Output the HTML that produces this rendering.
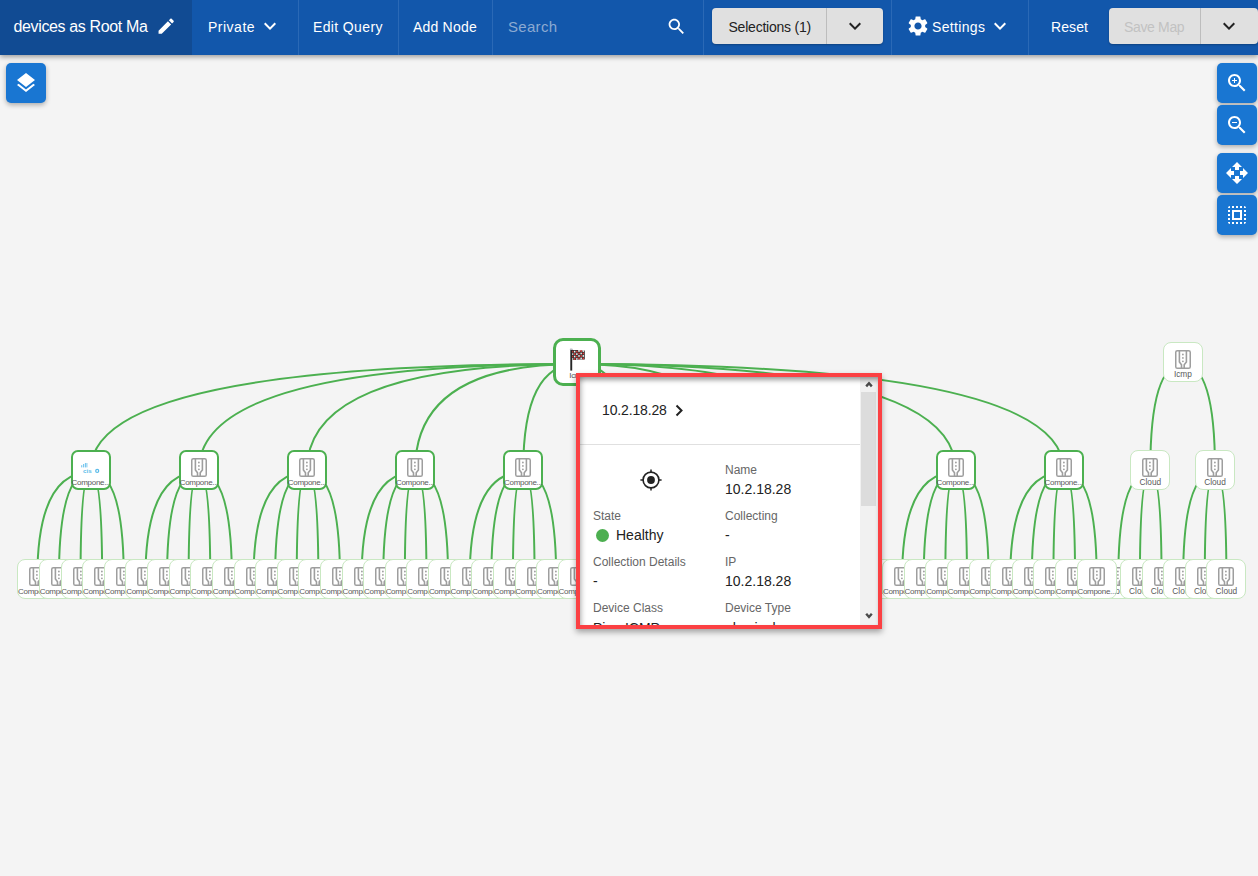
<!DOCTYPE html><html><head><meta charset="utf-8"><title>Map</title><style>
*{box-sizing:content-box}
html,body{margin:0;padding:0}
body{width:1258px;height:876px;overflow:hidden;background:#f4f4f4;font-family:"Liberation Sans",sans-serif;position:relative}
.hdr{position:absolute;left:0;top:0;width:1258px;height:55px;background:#1257ab;box-shadow:0 2px 5px rgba(0,0,0,.36);z-index:20}
.hdr .t{position:absolute;left:0;top:0;width:192px;height:55px;background:#114b93}
.hdr .txt{position:absolute;color:#fff;font-size:14px;white-space:nowrap;line-height:16px}
.sep{position:absolute;top:0;width:1px;height:55px;background:#2a69b6}
.btn{position:absolute;top:8px;height:36px;background:#e0e0e0;border-radius:4px;box-shadow:0 1px 2px rgba(0,0,0,.25)}
.btn .dv{position:absolute;top:0;width:1px;height:36px;background:#bdbdbd}
.edges{position:absolute;left:0;top:0;z-index:1}
.nd{position:absolute;background:#fff;box-sizing:content-box}
.nd .lb{position:absolute;left:-2px;right:-2px;bottom:2px;text-align:center;font-size:8px;line-height:9px;color:#5a5a5a;white-space:nowrap;overflow:visible;letter-spacing:-0.3px}
.nd .dev{position:absolute;left:50%;top:7px;margin-left:-8px}
.l1 .dev{top:6px}
.cl .lb{font-size:8.3px;letter-spacing:0}
.l1 .lb{bottom:1px}
.nd .cis{position:absolute;left:0;top:0}
.rt svg{position:absolute;left:11.6px;top:5.6px}
.rt .lb{bottom:3px;font-size:8px}
.fab{position:absolute;width:40px;height:40px;background:#1976d2;border-radius:5px;box-shadow:0 2px 5px rgba(0,0,0,.3);z-index:10}
.fab svg{position:absolute;left:8px;top:8px}
.pop{position:absolute;left:576px;top:373px;width:298px;height:248px;border:4px solid #fb4043;background:#fff;z-index:15;box-shadow:0 3px 6px rgba(0,0,0,.35);overflow:hidden}
.pop .ins{position:absolute;left:0;top:0;right:0;bottom:0;z-index:5;box-shadow:inset 0 5px 5px -2px rgba(0,0,0,.38), inset 5px 0 5px -3px rgba(0,0,0,.2)}
.pop .l{position:absolute;font-size:12px;color:#666;white-space:nowrap;line-height:14px}
.pop .v{position:absolute;font-size:14px;color:#222;white-space:nowrap;line-height:16px}
</style></head><body>
<div class="hdr"><div class="t"></div>
<div class="txt" style="left:13.5px;top:18px;font-size:16px;line-height:18px;letter-spacing:-0.36px">devices as Root Ma</div>
<svg style="position:absolute;left:155.6px;top:16px" width="20.4" height="20.4" viewBox="0 0 24 24"><path fill="#fff" d="M3 17.25V21h3.75L17.81 9.94l-3.75-3.75L3 17.25zM20.71 7.04c.39-.39.39-1.02 0-1.41l-2.34-2.34c-.39-.39-1.02-.39-1.41 0l-1.83 1.83 3.75 3.75 1.83-1.83z"/></svg>
<div class="txt" style="left:208px;top:19px;letter-spacing:0.5px">Private</div>
<div style="position:absolute;left:258px;top:14px"><svg style="display:block" width="24" height="24" viewBox="0 0 24 24"><path fill="#fff" d="M16.59 8.59L12 13.17 7.41 8.59 6 10l6 6 6-6z"/></svg></div>
<div class="sep" style="left:298px"></div>
<div class="txt" style="left:313px;top:19px;letter-spacing:0.37px">Edit Query</div>
<div class="sep" style="left:398px"></div>
<div class="txt" style="left:413px;top:19px;letter-spacing:0.2px">Add Node</div>
<div class="sep" style="left:492px"></div>
<div class="txt" style="left:508px;top:19px;color:#8caad2;font-size:15px;letter-spacing:0.3px">Search</div>
<svg style="position:absolute;left:665.9px;top:15.6px" width="21" height="21" viewBox="0 0 24 24"><path fill="#fff" d="M15.5 14h-.79l-.28-.27C15.41 12.59 16 11.11 16 9.5 16 5.91 13.09 3 9.5 3S3 5.91 3 9.5 5.91 16 9.5 16c1.61 0 3.09-.59 4.23-1.57l.27.28v.79l5 4.99L20.49 19l-4.99-5zm-6 0C7.01 14 5 11.99 5 9.5S7.01 5 9.5 5 14 7.01 14 9.5 11.99 14 9.5 14z"/></svg>
<div class="sep" style="left:703px"></div>
<div class="btn" style="left:712px;width:171px"><div class="dv" style="left:114px"></div><div class="txt" style="left:16.5px;top:11px;color:#222;letter-spacing:-0.22px">Selections (1)</div><div style="position:absolute;left:131px;top:6px"><svg style="display:block" width="24" height="24" viewBox="0 0 24 24"><path fill="#222" d="M16.59 8.59L12 13.17 7.41 8.59 6 10l6 6 6-6z"/></svg></div></div>
<div class="sep" style="left:891px"></div>
<svg style="position:absolute;left:906px;top:14px" width="24" height="24" viewBox="0 0 24 24"><path fill="#fff" d="M19.14 12.94c.04-.3.06-.61.06-.94 0-.32-.02-.64-.07-.94l2.03-1.58c.18-.14.23-.41.12-.61l-1.92-3.32c-.12-.22-.37-.29-.59-.22l-2.39.96c-.5-.38-1.03-.7-1.62-.94l-.36-2.54c-.04-.24-.24-.41-.48-.41h-3.84c-.24 0-.43.17-.47.41l-.36 2.54c-.59.24-1.13.57-1.62.94l-2.39-.96c-.22-.08-.47 0-.59.22L2.74 8.87c-.12.21-.08.47.12.61l2.03 1.58c-.05.3-.09.63-.09.94s.02.64.07.94l-2.03 1.58c-.18.14-.23.41-.12.61l1.92 3.32c.12.22.37.29.59.22l2.39-.96c.5.38 1.03.7 1.62.94l.36 2.54c.05.24.24.41.48.41h3.84c.24 0 .44-.17.47-.41l.36-2.54c.59-.24 1.13-.56 1.62-.94l2.39.96c.22.08.47 0 .59-.22l1.92-3.32c.12-.22.07-.47-.12-.61l-2.01-1.58zM12 15.6c-1.98 0-3.6-1.62-3.6-3.6s1.62-3.6 3.6-3.6 3.6 1.62 3.6 3.6-1.62 3.6-3.6 3.6z"/></svg>
<div class="txt" style="left:932px;top:19px;letter-spacing:0.33px">Settings</div>
<div style="position:absolute;left:988px;top:14px"><svg style="display:block" width="24" height="24" viewBox="0 0 24 24"><path fill="#fff" d="M16.59 8.59L12 13.17 7.41 8.59 6 10l6 6 6-6z"/></svg></div>
<div class="sep" style="left:1028px"></div>
<div class="txt" style="left:1051px;top:19px;letter-spacing:0.1px">Reset</div>
<div class="btn" style="left:1109px;width:149px"><div class="dv" style="left:91px"></div><div class="txt" style="left:15px;top:11px;color:#c2c2c2;letter-spacing:-0.34px">Save Map</div><div style="position:absolute;left:108px;top:6px"><svg style="display:block" width="24" height="24" viewBox="0 0 24 24"><path fill="#222" d="M16.59 8.59L12 13.17 7.41 8.59 6 10l6 6 6-6z"/></svg></div></div>
</div>
<svg class="edges" width="1258" height="876" viewBox="0 0 1258 876"><g fill="none" stroke="#4cb050" stroke-width="2"><path d="M577.3 364 Q90.8 364 90.8 470"/><path d="M577.3 364 Q198.9 364 198.9 470"/><path d="M577.3 364 Q307 364 307 470"/><path d="M577.3 364 Q415.1 364 415.1 470"/><path d="M577.3 364 Q523.2 364 523.2 470"/><path d="M577.3 364 Q631.3 364 631.3 470"/><path d="M577.3 364 Q739.4 364 739.4 470"/><path d="M577.3 364 Q847.5 364 847.5 470"/><path d="M577.3 364 Q955.6 364 955.6 470"/><path d="M577.3 364 Q1063.7 364 1063.7 470"/><path d="M1182.9 364 Q1150.3 364 1150.3 470"/><path d="M1182.9 364 Q1215 364 1215 470"/><path d="M90.8 472 Q37.3 472 37.3 578.6"/><path d="M90.8 472 Q58.92 472 58.92 578.6"/><path d="M90.8 472 Q80.54 472 80.54 578.6"/><path d="M90.8 472 Q102.16 472 102.16 578.6"/><path d="M90.8 472 Q123.78 472 123.78 578.6"/><path d="M198.9 472 Q145.4 472 145.4 578.6"/><path d="M198.9 472 Q167.02 472 167.02 578.6"/><path d="M198.9 472 Q188.64 472 188.64 578.6"/><path d="M198.9 472 Q210.26 472 210.26 578.6"/><path d="M198.9 472 Q231.88 472 231.88 578.6"/><path d="M307 472 Q253.5 472 253.5 578.6"/><path d="M307 472 Q275.12 472 275.12 578.6"/><path d="M307 472 Q296.74 472 296.74 578.6"/><path d="M307 472 Q318.36 472 318.36 578.6"/><path d="M307 472 Q339.98 472 339.98 578.6"/><path d="M415.1 472 Q361.6 472 361.6 578.6"/><path d="M415.1 472 Q383.22 472 383.22 578.6"/><path d="M415.1 472 Q404.84 472 404.84 578.6"/><path d="M415.1 472 Q426.46 472 426.46 578.6"/><path d="M415.1 472 Q448.08 472 448.08 578.6"/><path d="M523.2 472 Q469.7 472 469.7 578.6"/><path d="M523.2 472 Q491.32 472 491.32 578.6"/><path d="M523.2 472 Q512.94 472 512.94 578.6"/><path d="M523.2 472 Q534.56 472 534.56 578.6"/><path d="M523.2 472 Q556.18 472 556.18 578.6"/><path d="M631.3 472 Q577.8 472 577.8 578.6"/><path d="M631.3 472 Q599.42 472 599.42 578.6"/><path d="M631.3 472 Q621.04 472 621.04 578.6"/><path d="M631.3 472 Q642.66 472 642.66 578.6"/><path d="M631.3 472 Q664.28 472 664.28 578.6"/><path d="M739.4 472 Q685.9 472 685.9 578.6"/><path d="M739.4 472 Q707.52 472 707.52 578.6"/><path d="M739.4 472 Q729.14 472 729.14 578.6"/><path d="M739.4 472 Q750.76 472 750.76 578.6"/><path d="M739.4 472 Q772.38 472 772.38 578.6"/><path d="M847.5 472 Q794 472 794 578.6"/><path d="M847.5 472 Q815.62 472 815.62 578.6"/><path d="M847.5 472 Q837.24 472 837.24 578.6"/><path d="M847.5 472 Q858.86 472 858.86 578.6"/><path d="M847.5 472 Q880.48 472 880.48 578.6"/><path d="M955.6 472 Q902.1 472 902.1 578.6"/><path d="M955.6 472 Q923.72 472 923.72 578.6"/><path d="M955.6 472 Q945.34 472 945.34 578.6"/><path d="M955.6 472 Q966.96 472 966.96 578.6"/><path d="M955.6 472 Q988.58 472 988.58 578.6"/><path d="M1063.7 472 Q1010.2 472 1010.2 578.6"/><path d="M1063.7 472 Q1031.82 472 1031.82 578.6"/><path d="M1063.7 472 Q1053.44 472 1053.44 578.6"/><path d="M1063.7 472 Q1075.06 472 1075.06 578.6"/><path d="M1063.7 472 Q1096.68 472 1096.68 578.6"/><path d="M1150.3 472 Q1118.3 472 1118.3 578.6"/><path d="M1150.3 472 Q1139.92 472 1139.92 578.6"/><path d="M1150.3 472 Q1161.54 472 1161.54 578.6"/><path d="M1215 472 Q1183.16 472 1183.16 578.6"/><path d="M1215 472 Q1204.78 472 1204.78 578.6"/><path d="M1215 472 Q1226.4 472 1226.4 578.6"/></g></svg>
<div class="nd l2 cl" style="left:1098.3px;top:558.6px;width:38px;height:38px;border:1px solid #c9e8c2;border-radius:8px;z-index:2"><svg class="dev" width="16" height="19" viewBox="0 0 16 19"><rect x="0.75" y="0.75" width="14.5" height="17.5" rx="1.6" fill="none" stroke="#9e9e9e" stroke-width="1.5"/><path d="M4.4 1 V11.9 L6.5 14.8 V18.3 M11.4 1 V11.9 L9.2 14.8 V18.3" fill="none" stroke="#9e9e9e" stroke-width="1.6"/><circle cx="7.9" cy="4.5" r="0.9" fill="#9e9e9e"/><circle cx="7.9" cy="7.9" r="0.9" fill="#9e9e9e"/><circle cx="7.9" cy="11.3" r="0.9" fill="#9e9e9e"/></svg><span class="lb">Cloud</span></div>
<div class="nd l2 cl" style="left:1119.92px;top:558.6px;width:38px;height:38px;border:1px solid #c9e8c2;border-radius:8px;z-index:2"><svg class="dev" width="16" height="19" viewBox="0 0 16 19"><rect x="0.75" y="0.75" width="14.5" height="17.5" rx="1.6" fill="none" stroke="#9e9e9e" stroke-width="1.5"/><path d="M4.4 1 V11.9 L6.5 14.8 V18.3 M11.4 1 V11.9 L9.2 14.8 V18.3" fill="none" stroke="#9e9e9e" stroke-width="1.6"/><circle cx="7.9" cy="4.5" r="0.9" fill="#9e9e9e"/><circle cx="7.9" cy="7.9" r="0.9" fill="#9e9e9e"/><circle cx="7.9" cy="11.3" r="0.9" fill="#9e9e9e"/></svg><span class="lb">Cloud</span></div>
<div class="nd l2 cl" style="left:1141.54px;top:558.6px;width:38px;height:38px;border:1px solid #c9e8c2;border-radius:8px;z-index:2"><svg class="dev" width="16" height="19" viewBox="0 0 16 19"><rect x="0.75" y="0.75" width="14.5" height="17.5" rx="1.6" fill="none" stroke="#9e9e9e" stroke-width="1.5"/><path d="M4.4 1 V11.9 L6.5 14.8 V18.3 M11.4 1 V11.9 L9.2 14.8 V18.3" fill="none" stroke="#9e9e9e" stroke-width="1.6"/><circle cx="7.9" cy="4.5" r="0.9" fill="#9e9e9e"/><circle cx="7.9" cy="7.9" r="0.9" fill="#9e9e9e"/><circle cx="7.9" cy="11.3" r="0.9" fill="#9e9e9e"/></svg><span class="lb">Cloud</span></div>
<div class="nd l2 cl" style="left:1163.16px;top:558.6px;width:38px;height:38px;border:1px solid #c9e8c2;border-radius:8px;z-index:2"><svg class="dev" width="16" height="19" viewBox="0 0 16 19"><rect x="0.75" y="0.75" width="14.5" height="17.5" rx="1.6" fill="none" stroke="#9e9e9e" stroke-width="1.5"/><path d="M4.4 1 V11.9 L6.5 14.8 V18.3 M11.4 1 V11.9 L9.2 14.8 V18.3" fill="none" stroke="#9e9e9e" stroke-width="1.6"/><circle cx="7.9" cy="4.5" r="0.9" fill="#9e9e9e"/><circle cx="7.9" cy="7.9" r="0.9" fill="#9e9e9e"/><circle cx="7.9" cy="11.3" r="0.9" fill="#9e9e9e"/></svg><span class="lb">Cloud</span></div>
<div class="nd l2 cl" style="left:1184.78px;top:558.6px;width:38px;height:38px;border:1px solid #c9e8c2;border-radius:8px;z-index:2"><svg class="dev" width="16" height="19" viewBox="0 0 16 19"><rect x="0.75" y="0.75" width="14.5" height="17.5" rx="1.6" fill="none" stroke="#9e9e9e" stroke-width="1.5"/><path d="M4.4 1 V11.9 L6.5 14.8 V18.3 M11.4 1 V11.9 L9.2 14.8 V18.3" fill="none" stroke="#9e9e9e" stroke-width="1.6"/><circle cx="7.9" cy="4.5" r="0.9" fill="#9e9e9e"/><circle cx="7.9" cy="7.9" r="0.9" fill="#9e9e9e"/><circle cx="7.9" cy="11.3" r="0.9" fill="#9e9e9e"/></svg><span class="lb">Cloud</span></div>
<div class="nd l2 cl" style="left:1206.4px;top:558.6px;width:38px;height:38px;border:1px solid #c9e8c2;border-radius:8px;z-index:2"><svg class="dev" width="16" height="19" viewBox="0 0 16 19"><rect x="0.75" y="0.75" width="14.5" height="17.5" rx="1.6" fill="none" stroke="#9e9e9e" stroke-width="1.5"/><path d="M4.4 1 V11.9 L6.5 14.8 V18.3 M11.4 1 V11.9 L9.2 14.8 V18.3" fill="none" stroke="#9e9e9e" stroke-width="1.6"/><circle cx="7.9" cy="4.5" r="0.9" fill="#9e9e9e"/><circle cx="7.9" cy="7.9" r="0.9" fill="#9e9e9e"/><circle cx="7.9" cy="11.3" r="0.9" fill="#9e9e9e"/></svg><span class="lb">Cloud</span></div>
<div class="nd l2" style="left:17.3px;top:558.6px;width:38px;height:38px;border:1px solid #c9e8c2;border-radius:8px;z-index:2"><svg class="dev" width="16" height="19" viewBox="0 0 16 19"><rect x="0.75" y="0.75" width="14.5" height="17.5" rx="1.6" fill="none" stroke="#9e9e9e" stroke-width="1.5"/><path d="M4.4 1 V11.9 L6.5 14.8 V18.3 M11.4 1 V11.9 L9.2 14.8 V18.3" fill="none" stroke="#9e9e9e" stroke-width="1.6"/><circle cx="7.9" cy="4.5" r="0.9" fill="#9e9e9e"/><circle cx="7.9" cy="7.9" r="0.9" fill="#9e9e9e"/><circle cx="7.9" cy="11.3" r="0.9" fill="#9e9e9e"/></svg><span class="lb">Compone...</span></div>
<div class="nd l2" style="left:38.92px;top:558.6px;width:38px;height:38px;border:1px solid #c9e8c2;border-radius:8px;z-index:2"><svg class="dev" width="16" height="19" viewBox="0 0 16 19"><rect x="0.75" y="0.75" width="14.5" height="17.5" rx="1.6" fill="none" stroke="#9e9e9e" stroke-width="1.5"/><path d="M4.4 1 V11.9 L6.5 14.8 V18.3 M11.4 1 V11.9 L9.2 14.8 V18.3" fill="none" stroke="#9e9e9e" stroke-width="1.6"/><circle cx="7.9" cy="4.5" r="0.9" fill="#9e9e9e"/><circle cx="7.9" cy="7.9" r="0.9" fill="#9e9e9e"/><circle cx="7.9" cy="11.3" r="0.9" fill="#9e9e9e"/></svg><span class="lb">Compone...</span></div>
<div class="nd l2" style="left:60.54px;top:558.6px;width:38px;height:38px;border:1px solid #c9e8c2;border-radius:8px;z-index:2"><svg class="dev" width="16" height="19" viewBox="0 0 16 19"><rect x="0.75" y="0.75" width="14.5" height="17.5" rx="1.6" fill="none" stroke="#9e9e9e" stroke-width="1.5"/><path d="M4.4 1 V11.9 L6.5 14.8 V18.3 M11.4 1 V11.9 L9.2 14.8 V18.3" fill="none" stroke="#9e9e9e" stroke-width="1.6"/><circle cx="7.9" cy="4.5" r="0.9" fill="#9e9e9e"/><circle cx="7.9" cy="7.9" r="0.9" fill="#9e9e9e"/><circle cx="7.9" cy="11.3" r="0.9" fill="#9e9e9e"/></svg><span class="lb">Compone...</span></div>
<div class="nd l2" style="left:82.16px;top:558.6px;width:38px;height:38px;border:1px solid #c9e8c2;border-radius:8px;z-index:2"><svg class="dev" width="16" height="19" viewBox="0 0 16 19"><rect x="0.75" y="0.75" width="14.5" height="17.5" rx="1.6" fill="none" stroke="#9e9e9e" stroke-width="1.5"/><path d="M4.4 1 V11.9 L6.5 14.8 V18.3 M11.4 1 V11.9 L9.2 14.8 V18.3" fill="none" stroke="#9e9e9e" stroke-width="1.6"/><circle cx="7.9" cy="4.5" r="0.9" fill="#9e9e9e"/><circle cx="7.9" cy="7.9" r="0.9" fill="#9e9e9e"/><circle cx="7.9" cy="11.3" r="0.9" fill="#9e9e9e"/></svg><span class="lb">Compone...</span></div>
<div class="nd l2" style="left:103.78px;top:558.6px;width:38px;height:38px;border:1px solid #c9e8c2;border-radius:8px;z-index:2"><svg class="dev" width="16" height="19" viewBox="0 0 16 19"><rect x="0.75" y="0.75" width="14.5" height="17.5" rx="1.6" fill="none" stroke="#9e9e9e" stroke-width="1.5"/><path d="M4.4 1 V11.9 L6.5 14.8 V18.3 M11.4 1 V11.9 L9.2 14.8 V18.3" fill="none" stroke="#9e9e9e" stroke-width="1.6"/><circle cx="7.9" cy="4.5" r="0.9" fill="#9e9e9e"/><circle cx="7.9" cy="7.9" r="0.9" fill="#9e9e9e"/><circle cx="7.9" cy="11.3" r="0.9" fill="#9e9e9e"/></svg><span class="lb">Compone...</span></div>
<div class="nd l2" style="left:125.4px;top:558.6px;width:38px;height:38px;border:1px solid #c9e8c2;border-radius:8px;z-index:2"><svg class="dev" width="16" height="19" viewBox="0 0 16 19"><rect x="0.75" y="0.75" width="14.5" height="17.5" rx="1.6" fill="none" stroke="#9e9e9e" stroke-width="1.5"/><path d="M4.4 1 V11.9 L6.5 14.8 V18.3 M11.4 1 V11.9 L9.2 14.8 V18.3" fill="none" stroke="#9e9e9e" stroke-width="1.6"/><circle cx="7.9" cy="4.5" r="0.9" fill="#9e9e9e"/><circle cx="7.9" cy="7.9" r="0.9" fill="#9e9e9e"/><circle cx="7.9" cy="11.3" r="0.9" fill="#9e9e9e"/></svg><span class="lb">Compone...</span></div>
<div class="nd l2" style="left:147.02px;top:558.6px;width:38px;height:38px;border:1px solid #c9e8c2;border-radius:8px;z-index:2"><svg class="dev" width="16" height="19" viewBox="0 0 16 19"><rect x="0.75" y="0.75" width="14.5" height="17.5" rx="1.6" fill="none" stroke="#9e9e9e" stroke-width="1.5"/><path d="M4.4 1 V11.9 L6.5 14.8 V18.3 M11.4 1 V11.9 L9.2 14.8 V18.3" fill="none" stroke="#9e9e9e" stroke-width="1.6"/><circle cx="7.9" cy="4.5" r="0.9" fill="#9e9e9e"/><circle cx="7.9" cy="7.9" r="0.9" fill="#9e9e9e"/><circle cx="7.9" cy="11.3" r="0.9" fill="#9e9e9e"/></svg><span class="lb">Compone...</span></div>
<div class="nd l2" style="left:168.64px;top:558.6px;width:38px;height:38px;border:1px solid #c9e8c2;border-radius:8px;z-index:2"><svg class="dev" width="16" height="19" viewBox="0 0 16 19"><rect x="0.75" y="0.75" width="14.5" height="17.5" rx="1.6" fill="none" stroke="#9e9e9e" stroke-width="1.5"/><path d="M4.4 1 V11.9 L6.5 14.8 V18.3 M11.4 1 V11.9 L9.2 14.8 V18.3" fill="none" stroke="#9e9e9e" stroke-width="1.6"/><circle cx="7.9" cy="4.5" r="0.9" fill="#9e9e9e"/><circle cx="7.9" cy="7.9" r="0.9" fill="#9e9e9e"/><circle cx="7.9" cy="11.3" r="0.9" fill="#9e9e9e"/></svg><span class="lb">Compone...</span></div>
<div class="nd l2" style="left:190.26px;top:558.6px;width:38px;height:38px;border:1px solid #c9e8c2;border-radius:8px;z-index:2"><svg class="dev" width="16" height="19" viewBox="0 0 16 19"><rect x="0.75" y="0.75" width="14.5" height="17.5" rx="1.6" fill="none" stroke="#9e9e9e" stroke-width="1.5"/><path d="M4.4 1 V11.9 L6.5 14.8 V18.3 M11.4 1 V11.9 L9.2 14.8 V18.3" fill="none" stroke="#9e9e9e" stroke-width="1.6"/><circle cx="7.9" cy="4.5" r="0.9" fill="#9e9e9e"/><circle cx="7.9" cy="7.9" r="0.9" fill="#9e9e9e"/><circle cx="7.9" cy="11.3" r="0.9" fill="#9e9e9e"/></svg><span class="lb">Compone...</span></div>
<div class="nd l2" style="left:211.88px;top:558.6px;width:38px;height:38px;border:1px solid #c9e8c2;border-radius:8px;z-index:2"><svg class="dev" width="16" height="19" viewBox="0 0 16 19"><rect x="0.75" y="0.75" width="14.5" height="17.5" rx="1.6" fill="none" stroke="#9e9e9e" stroke-width="1.5"/><path d="M4.4 1 V11.9 L6.5 14.8 V18.3 M11.4 1 V11.9 L9.2 14.8 V18.3" fill="none" stroke="#9e9e9e" stroke-width="1.6"/><circle cx="7.9" cy="4.5" r="0.9" fill="#9e9e9e"/><circle cx="7.9" cy="7.9" r="0.9" fill="#9e9e9e"/><circle cx="7.9" cy="11.3" r="0.9" fill="#9e9e9e"/></svg><span class="lb">Compone...</span></div>
<div class="nd l2" style="left:233.5px;top:558.6px;width:38px;height:38px;border:1px solid #c9e8c2;border-radius:8px;z-index:2"><svg class="dev" width="16" height="19" viewBox="0 0 16 19"><rect x="0.75" y="0.75" width="14.5" height="17.5" rx="1.6" fill="none" stroke="#9e9e9e" stroke-width="1.5"/><path d="M4.4 1 V11.9 L6.5 14.8 V18.3 M11.4 1 V11.9 L9.2 14.8 V18.3" fill="none" stroke="#9e9e9e" stroke-width="1.6"/><circle cx="7.9" cy="4.5" r="0.9" fill="#9e9e9e"/><circle cx="7.9" cy="7.9" r="0.9" fill="#9e9e9e"/><circle cx="7.9" cy="11.3" r="0.9" fill="#9e9e9e"/></svg><span class="lb">Compone...</span></div>
<div class="nd l2" style="left:255.12px;top:558.6px;width:38px;height:38px;border:1px solid #c9e8c2;border-radius:8px;z-index:2"><svg class="dev" width="16" height="19" viewBox="0 0 16 19"><rect x="0.75" y="0.75" width="14.5" height="17.5" rx="1.6" fill="none" stroke="#9e9e9e" stroke-width="1.5"/><path d="M4.4 1 V11.9 L6.5 14.8 V18.3 M11.4 1 V11.9 L9.2 14.8 V18.3" fill="none" stroke="#9e9e9e" stroke-width="1.6"/><circle cx="7.9" cy="4.5" r="0.9" fill="#9e9e9e"/><circle cx="7.9" cy="7.9" r="0.9" fill="#9e9e9e"/><circle cx="7.9" cy="11.3" r="0.9" fill="#9e9e9e"/></svg><span class="lb">Compone...</span></div>
<div class="nd l2" style="left:276.74px;top:558.6px;width:38px;height:38px;border:1px solid #c9e8c2;border-radius:8px;z-index:2"><svg class="dev" width="16" height="19" viewBox="0 0 16 19"><rect x="0.75" y="0.75" width="14.5" height="17.5" rx="1.6" fill="none" stroke="#9e9e9e" stroke-width="1.5"/><path d="M4.4 1 V11.9 L6.5 14.8 V18.3 M11.4 1 V11.9 L9.2 14.8 V18.3" fill="none" stroke="#9e9e9e" stroke-width="1.6"/><circle cx="7.9" cy="4.5" r="0.9" fill="#9e9e9e"/><circle cx="7.9" cy="7.9" r="0.9" fill="#9e9e9e"/><circle cx="7.9" cy="11.3" r="0.9" fill="#9e9e9e"/></svg><span class="lb">Compone...</span></div>
<div class="nd l2" style="left:298.36px;top:558.6px;width:38px;height:38px;border:1px solid #c9e8c2;border-radius:8px;z-index:2"><svg class="dev" width="16" height="19" viewBox="0 0 16 19"><rect x="0.75" y="0.75" width="14.5" height="17.5" rx="1.6" fill="none" stroke="#9e9e9e" stroke-width="1.5"/><path d="M4.4 1 V11.9 L6.5 14.8 V18.3 M11.4 1 V11.9 L9.2 14.8 V18.3" fill="none" stroke="#9e9e9e" stroke-width="1.6"/><circle cx="7.9" cy="4.5" r="0.9" fill="#9e9e9e"/><circle cx="7.9" cy="7.9" r="0.9" fill="#9e9e9e"/><circle cx="7.9" cy="11.3" r="0.9" fill="#9e9e9e"/></svg><span class="lb">Compone...</span></div>
<div class="nd l2" style="left:319.98px;top:558.6px;width:38px;height:38px;border:1px solid #c9e8c2;border-radius:8px;z-index:2"><svg class="dev" width="16" height="19" viewBox="0 0 16 19"><rect x="0.75" y="0.75" width="14.5" height="17.5" rx="1.6" fill="none" stroke="#9e9e9e" stroke-width="1.5"/><path d="M4.4 1 V11.9 L6.5 14.8 V18.3 M11.4 1 V11.9 L9.2 14.8 V18.3" fill="none" stroke="#9e9e9e" stroke-width="1.6"/><circle cx="7.9" cy="4.5" r="0.9" fill="#9e9e9e"/><circle cx="7.9" cy="7.9" r="0.9" fill="#9e9e9e"/><circle cx="7.9" cy="11.3" r="0.9" fill="#9e9e9e"/></svg><span class="lb">Compone...</span></div>
<div class="nd l2" style="left:341.6px;top:558.6px;width:38px;height:38px;border:1px solid #c9e8c2;border-radius:8px;z-index:2"><svg class="dev" width="16" height="19" viewBox="0 0 16 19"><rect x="0.75" y="0.75" width="14.5" height="17.5" rx="1.6" fill="none" stroke="#9e9e9e" stroke-width="1.5"/><path d="M4.4 1 V11.9 L6.5 14.8 V18.3 M11.4 1 V11.9 L9.2 14.8 V18.3" fill="none" stroke="#9e9e9e" stroke-width="1.6"/><circle cx="7.9" cy="4.5" r="0.9" fill="#9e9e9e"/><circle cx="7.9" cy="7.9" r="0.9" fill="#9e9e9e"/><circle cx="7.9" cy="11.3" r="0.9" fill="#9e9e9e"/></svg><span class="lb">Compone...</span></div>
<div class="nd l2" style="left:363.22px;top:558.6px;width:38px;height:38px;border:1px solid #c9e8c2;border-radius:8px;z-index:2"><svg class="dev" width="16" height="19" viewBox="0 0 16 19"><rect x="0.75" y="0.75" width="14.5" height="17.5" rx="1.6" fill="none" stroke="#9e9e9e" stroke-width="1.5"/><path d="M4.4 1 V11.9 L6.5 14.8 V18.3 M11.4 1 V11.9 L9.2 14.8 V18.3" fill="none" stroke="#9e9e9e" stroke-width="1.6"/><circle cx="7.9" cy="4.5" r="0.9" fill="#9e9e9e"/><circle cx="7.9" cy="7.9" r="0.9" fill="#9e9e9e"/><circle cx="7.9" cy="11.3" r="0.9" fill="#9e9e9e"/></svg><span class="lb">Compone...</span></div>
<div class="nd l2" style="left:384.84px;top:558.6px;width:38px;height:38px;border:1px solid #c9e8c2;border-radius:8px;z-index:2"><svg class="dev" width="16" height="19" viewBox="0 0 16 19"><rect x="0.75" y="0.75" width="14.5" height="17.5" rx="1.6" fill="none" stroke="#9e9e9e" stroke-width="1.5"/><path d="M4.4 1 V11.9 L6.5 14.8 V18.3 M11.4 1 V11.9 L9.2 14.8 V18.3" fill="none" stroke="#9e9e9e" stroke-width="1.6"/><circle cx="7.9" cy="4.5" r="0.9" fill="#9e9e9e"/><circle cx="7.9" cy="7.9" r="0.9" fill="#9e9e9e"/><circle cx="7.9" cy="11.3" r="0.9" fill="#9e9e9e"/></svg><span class="lb">Compone...</span></div>
<div class="nd l2" style="left:406.46px;top:558.6px;width:38px;height:38px;border:1px solid #c9e8c2;border-radius:8px;z-index:2"><svg class="dev" width="16" height="19" viewBox="0 0 16 19"><rect x="0.75" y="0.75" width="14.5" height="17.5" rx="1.6" fill="none" stroke="#9e9e9e" stroke-width="1.5"/><path d="M4.4 1 V11.9 L6.5 14.8 V18.3 M11.4 1 V11.9 L9.2 14.8 V18.3" fill="none" stroke="#9e9e9e" stroke-width="1.6"/><circle cx="7.9" cy="4.5" r="0.9" fill="#9e9e9e"/><circle cx="7.9" cy="7.9" r="0.9" fill="#9e9e9e"/><circle cx="7.9" cy="11.3" r="0.9" fill="#9e9e9e"/></svg><span class="lb">Compone...</span></div>
<div class="nd l2" style="left:428.08px;top:558.6px;width:38px;height:38px;border:1px solid #c9e8c2;border-radius:8px;z-index:2"><svg class="dev" width="16" height="19" viewBox="0 0 16 19"><rect x="0.75" y="0.75" width="14.5" height="17.5" rx="1.6" fill="none" stroke="#9e9e9e" stroke-width="1.5"/><path d="M4.4 1 V11.9 L6.5 14.8 V18.3 M11.4 1 V11.9 L9.2 14.8 V18.3" fill="none" stroke="#9e9e9e" stroke-width="1.6"/><circle cx="7.9" cy="4.5" r="0.9" fill="#9e9e9e"/><circle cx="7.9" cy="7.9" r="0.9" fill="#9e9e9e"/><circle cx="7.9" cy="11.3" r="0.9" fill="#9e9e9e"/></svg><span class="lb">Compone...</span></div>
<div class="nd l2" style="left:449.7px;top:558.6px;width:38px;height:38px;border:1px solid #c9e8c2;border-radius:8px;z-index:2"><svg class="dev" width="16" height="19" viewBox="0 0 16 19"><rect x="0.75" y="0.75" width="14.5" height="17.5" rx="1.6" fill="none" stroke="#9e9e9e" stroke-width="1.5"/><path d="M4.4 1 V11.9 L6.5 14.8 V18.3 M11.4 1 V11.9 L9.2 14.8 V18.3" fill="none" stroke="#9e9e9e" stroke-width="1.6"/><circle cx="7.9" cy="4.5" r="0.9" fill="#9e9e9e"/><circle cx="7.9" cy="7.9" r="0.9" fill="#9e9e9e"/><circle cx="7.9" cy="11.3" r="0.9" fill="#9e9e9e"/></svg><span class="lb">Compone...</span></div>
<div class="nd l2" style="left:471.32px;top:558.6px;width:38px;height:38px;border:1px solid #c9e8c2;border-radius:8px;z-index:2"><svg class="dev" width="16" height="19" viewBox="0 0 16 19"><rect x="0.75" y="0.75" width="14.5" height="17.5" rx="1.6" fill="none" stroke="#9e9e9e" stroke-width="1.5"/><path d="M4.4 1 V11.9 L6.5 14.8 V18.3 M11.4 1 V11.9 L9.2 14.8 V18.3" fill="none" stroke="#9e9e9e" stroke-width="1.6"/><circle cx="7.9" cy="4.5" r="0.9" fill="#9e9e9e"/><circle cx="7.9" cy="7.9" r="0.9" fill="#9e9e9e"/><circle cx="7.9" cy="11.3" r="0.9" fill="#9e9e9e"/></svg><span class="lb">Compone...</span></div>
<div class="nd l2" style="left:492.94px;top:558.6px;width:38px;height:38px;border:1px solid #c9e8c2;border-radius:8px;z-index:2"><svg class="dev" width="16" height="19" viewBox="0 0 16 19"><rect x="0.75" y="0.75" width="14.5" height="17.5" rx="1.6" fill="none" stroke="#9e9e9e" stroke-width="1.5"/><path d="M4.4 1 V11.9 L6.5 14.8 V18.3 M11.4 1 V11.9 L9.2 14.8 V18.3" fill="none" stroke="#9e9e9e" stroke-width="1.6"/><circle cx="7.9" cy="4.5" r="0.9" fill="#9e9e9e"/><circle cx="7.9" cy="7.9" r="0.9" fill="#9e9e9e"/><circle cx="7.9" cy="11.3" r="0.9" fill="#9e9e9e"/></svg><span class="lb">Compone...</span></div>
<div class="nd l2" style="left:514.56px;top:558.6px;width:38px;height:38px;border:1px solid #c9e8c2;border-radius:8px;z-index:2"><svg class="dev" width="16" height="19" viewBox="0 0 16 19"><rect x="0.75" y="0.75" width="14.5" height="17.5" rx="1.6" fill="none" stroke="#9e9e9e" stroke-width="1.5"/><path d="M4.4 1 V11.9 L6.5 14.8 V18.3 M11.4 1 V11.9 L9.2 14.8 V18.3" fill="none" stroke="#9e9e9e" stroke-width="1.6"/><circle cx="7.9" cy="4.5" r="0.9" fill="#9e9e9e"/><circle cx="7.9" cy="7.9" r="0.9" fill="#9e9e9e"/><circle cx="7.9" cy="11.3" r="0.9" fill="#9e9e9e"/></svg><span class="lb">Compone...</span></div>
<div class="nd l2" style="left:536.18px;top:558.6px;width:38px;height:38px;border:1px solid #c9e8c2;border-radius:8px;z-index:2"><svg class="dev" width="16" height="19" viewBox="0 0 16 19"><rect x="0.75" y="0.75" width="14.5" height="17.5" rx="1.6" fill="none" stroke="#9e9e9e" stroke-width="1.5"/><path d="M4.4 1 V11.9 L6.5 14.8 V18.3 M11.4 1 V11.9 L9.2 14.8 V18.3" fill="none" stroke="#9e9e9e" stroke-width="1.6"/><circle cx="7.9" cy="4.5" r="0.9" fill="#9e9e9e"/><circle cx="7.9" cy="7.9" r="0.9" fill="#9e9e9e"/><circle cx="7.9" cy="11.3" r="0.9" fill="#9e9e9e"/></svg><span class="lb">Compone...</span></div>
<div class="nd l2" style="left:557.8px;top:558.6px;width:38px;height:38px;border:1px solid #c9e8c2;border-radius:8px;z-index:2"><svg class="dev" width="16" height="19" viewBox="0 0 16 19"><rect x="0.75" y="0.75" width="14.5" height="17.5" rx="1.6" fill="none" stroke="#9e9e9e" stroke-width="1.5"/><path d="M4.4 1 V11.9 L6.5 14.8 V18.3 M11.4 1 V11.9 L9.2 14.8 V18.3" fill="none" stroke="#9e9e9e" stroke-width="1.6"/><circle cx="7.9" cy="4.5" r="0.9" fill="#9e9e9e"/><circle cx="7.9" cy="7.9" r="0.9" fill="#9e9e9e"/><circle cx="7.9" cy="11.3" r="0.9" fill="#9e9e9e"/></svg><span class="lb">Compone...</span></div>
<div class="nd l2" style="left:579.42px;top:558.6px;width:38px;height:38px;border:1px solid #c9e8c2;border-radius:8px;z-index:2"><svg class="dev" width="16" height="19" viewBox="0 0 16 19"><rect x="0.75" y="0.75" width="14.5" height="17.5" rx="1.6" fill="none" stroke="#9e9e9e" stroke-width="1.5"/><path d="M4.4 1 V11.9 L6.5 14.8 V18.3 M11.4 1 V11.9 L9.2 14.8 V18.3" fill="none" stroke="#9e9e9e" stroke-width="1.6"/><circle cx="7.9" cy="4.5" r="0.9" fill="#9e9e9e"/><circle cx="7.9" cy="7.9" r="0.9" fill="#9e9e9e"/><circle cx="7.9" cy="11.3" r="0.9" fill="#9e9e9e"/></svg><span class="lb">Compone...</span></div>
<div class="nd l2" style="left:601.04px;top:558.6px;width:38px;height:38px;border:1px solid #c9e8c2;border-radius:8px;z-index:2"><svg class="dev" width="16" height="19" viewBox="0 0 16 19"><rect x="0.75" y="0.75" width="14.5" height="17.5" rx="1.6" fill="none" stroke="#9e9e9e" stroke-width="1.5"/><path d="M4.4 1 V11.9 L6.5 14.8 V18.3 M11.4 1 V11.9 L9.2 14.8 V18.3" fill="none" stroke="#9e9e9e" stroke-width="1.6"/><circle cx="7.9" cy="4.5" r="0.9" fill="#9e9e9e"/><circle cx="7.9" cy="7.9" r="0.9" fill="#9e9e9e"/><circle cx="7.9" cy="11.3" r="0.9" fill="#9e9e9e"/></svg><span class="lb">Compone...</span></div>
<div class="nd l2" style="left:622.66px;top:558.6px;width:38px;height:38px;border:1px solid #c9e8c2;border-radius:8px;z-index:2"><svg class="dev" width="16" height="19" viewBox="0 0 16 19"><rect x="0.75" y="0.75" width="14.5" height="17.5" rx="1.6" fill="none" stroke="#9e9e9e" stroke-width="1.5"/><path d="M4.4 1 V11.9 L6.5 14.8 V18.3 M11.4 1 V11.9 L9.2 14.8 V18.3" fill="none" stroke="#9e9e9e" stroke-width="1.6"/><circle cx="7.9" cy="4.5" r="0.9" fill="#9e9e9e"/><circle cx="7.9" cy="7.9" r="0.9" fill="#9e9e9e"/><circle cx="7.9" cy="11.3" r="0.9" fill="#9e9e9e"/></svg><span class="lb">Compone...</span></div>
<div class="nd l2" style="left:644.28px;top:558.6px;width:38px;height:38px;border:1px solid #c9e8c2;border-radius:8px;z-index:2"><svg class="dev" width="16" height="19" viewBox="0 0 16 19"><rect x="0.75" y="0.75" width="14.5" height="17.5" rx="1.6" fill="none" stroke="#9e9e9e" stroke-width="1.5"/><path d="M4.4 1 V11.9 L6.5 14.8 V18.3 M11.4 1 V11.9 L9.2 14.8 V18.3" fill="none" stroke="#9e9e9e" stroke-width="1.6"/><circle cx="7.9" cy="4.5" r="0.9" fill="#9e9e9e"/><circle cx="7.9" cy="7.9" r="0.9" fill="#9e9e9e"/><circle cx="7.9" cy="11.3" r="0.9" fill="#9e9e9e"/></svg><span class="lb">Compone...</span></div>
<div class="nd l2" style="left:665.9px;top:558.6px;width:38px;height:38px;border:1px solid #c9e8c2;border-radius:8px;z-index:2"><svg class="dev" width="16" height="19" viewBox="0 0 16 19"><rect x="0.75" y="0.75" width="14.5" height="17.5" rx="1.6" fill="none" stroke="#9e9e9e" stroke-width="1.5"/><path d="M4.4 1 V11.9 L6.5 14.8 V18.3 M11.4 1 V11.9 L9.2 14.8 V18.3" fill="none" stroke="#9e9e9e" stroke-width="1.6"/><circle cx="7.9" cy="4.5" r="0.9" fill="#9e9e9e"/><circle cx="7.9" cy="7.9" r="0.9" fill="#9e9e9e"/><circle cx="7.9" cy="11.3" r="0.9" fill="#9e9e9e"/></svg><span class="lb">Compone...</span></div>
<div class="nd l2" style="left:687.52px;top:558.6px;width:38px;height:38px;border:1px solid #c9e8c2;border-radius:8px;z-index:2"><svg class="dev" width="16" height="19" viewBox="0 0 16 19"><rect x="0.75" y="0.75" width="14.5" height="17.5" rx="1.6" fill="none" stroke="#9e9e9e" stroke-width="1.5"/><path d="M4.4 1 V11.9 L6.5 14.8 V18.3 M11.4 1 V11.9 L9.2 14.8 V18.3" fill="none" stroke="#9e9e9e" stroke-width="1.6"/><circle cx="7.9" cy="4.5" r="0.9" fill="#9e9e9e"/><circle cx="7.9" cy="7.9" r="0.9" fill="#9e9e9e"/><circle cx="7.9" cy="11.3" r="0.9" fill="#9e9e9e"/></svg><span class="lb">Compone...</span></div>
<div class="nd l2" style="left:709.14px;top:558.6px;width:38px;height:38px;border:1px solid #c9e8c2;border-radius:8px;z-index:2"><svg class="dev" width="16" height="19" viewBox="0 0 16 19"><rect x="0.75" y="0.75" width="14.5" height="17.5" rx="1.6" fill="none" stroke="#9e9e9e" stroke-width="1.5"/><path d="M4.4 1 V11.9 L6.5 14.8 V18.3 M11.4 1 V11.9 L9.2 14.8 V18.3" fill="none" stroke="#9e9e9e" stroke-width="1.6"/><circle cx="7.9" cy="4.5" r="0.9" fill="#9e9e9e"/><circle cx="7.9" cy="7.9" r="0.9" fill="#9e9e9e"/><circle cx="7.9" cy="11.3" r="0.9" fill="#9e9e9e"/></svg><span class="lb">Compone...</span></div>
<div class="nd l2" style="left:730.76px;top:558.6px;width:38px;height:38px;border:1px solid #c9e8c2;border-radius:8px;z-index:2"><svg class="dev" width="16" height="19" viewBox="0 0 16 19"><rect x="0.75" y="0.75" width="14.5" height="17.5" rx="1.6" fill="none" stroke="#9e9e9e" stroke-width="1.5"/><path d="M4.4 1 V11.9 L6.5 14.8 V18.3 M11.4 1 V11.9 L9.2 14.8 V18.3" fill="none" stroke="#9e9e9e" stroke-width="1.6"/><circle cx="7.9" cy="4.5" r="0.9" fill="#9e9e9e"/><circle cx="7.9" cy="7.9" r="0.9" fill="#9e9e9e"/><circle cx="7.9" cy="11.3" r="0.9" fill="#9e9e9e"/></svg><span class="lb">Compone...</span></div>
<div class="nd l2" style="left:752.38px;top:558.6px;width:38px;height:38px;border:1px solid #c9e8c2;border-radius:8px;z-index:2"><svg class="dev" width="16" height="19" viewBox="0 0 16 19"><rect x="0.75" y="0.75" width="14.5" height="17.5" rx="1.6" fill="none" stroke="#9e9e9e" stroke-width="1.5"/><path d="M4.4 1 V11.9 L6.5 14.8 V18.3 M11.4 1 V11.9 L9.2 14.8 V18.3" fill="none" stroke="#9e9e9e" stroke-width="1.6"/><circle cx="7.9" cy="4.5" r="0.9" fill="#9e9e9e"/><circle cx="7.9" cy="7.9" r="0.9" fill="#9e9e9e"/><circle cx="7.9" cy="11.3" r="0.9" fill="#9e9e9e"/></svg><span class="lb">Compone...</span></div>
<div class="nd l2" style="left:774px;top:558.6px;width:38px;height:38px;border:1px solid #c9e8c2;border-radius:8px;z-index:2"><svg class="dev" width="16" height="19" viewBox="0 0 16 19"><rect x="0.75" y="0.75" width="14.5" height="17.5" rx="1.6" fill="none" stroke="#9e9e9e" stroke-width="1.5"/><path d="M4.4 1 V11.9 L6.5 14.8 V18.3 M11.4 1 V11.9 L9.2 14.8 V18.3" fill="none" stroke="#9e9e9e" stroke-width="1.6"/><circle cx="7.9" cy="4.5" r="0.9" fill="#9e9e9e"/><circle cx="7.9" cy="7.9" r="0.9" fill="#9e9e9e"/><circle cx="7.9" cy="11.3" r="0.9" fill="#9e9e9e"/></svg><span class="lb">Compone...</span></div>
<div class="nd l2" style="left:795.62px;top:558.6px;width:38px;height:38px;border:1px solid #c9e8c2;border-radius:8px;z-index:2"><svg class="dev" width="16" height="19" viewBox="0 0 16 19"><rect x="0.75" y="0.75" width="14.5" height="17.5" rx="1.6" fill="none" stroke="#9e9e9e" stroke-width="1.5"/><path d="M4.4 1 V11.9 L6.5 14.8 V18.3 M11.4 1 V11.9 L9.2 14.8 V18.3" fill="none" stroke="#9e9e9e" stroke-width="1.6"/><circle cx="7.9" cy="4.5" r="0.9" fill="#9e9e9e"/><circle cx="7.9" cy="7.9" r="0.9" fill="#9e9e9e"/><circle cx="7.9" cy="11.3" r="0.9" fill="#9e9e9e"/></svg><span class="lb">Compone...</span></div>
<div class="nd l2" style="left:817.24px;top:558.6px;width:38px;height:38px;border:1px solid #c9e8c2;border-radius:8px;z-index:2"><svg class="dev" width="16" height="19" viewBox="0 0 16 19"><rect x="0.75" y="0.75" width="14.5" height="17.5" rx="1.6" fill="none" stroke="#9e9e9e" stroke-width="1.5"/><path d="M4.4 1 V11.9 L6.5 14.8 V18.3 M11.4 1 V11.9 L9.2 14.8 V18.3" fill="none" stroke="#9e9e9e" stroke-width="1.6"/><circle cx="7.9" cy="4.5" r="0.9" fill="#9e9e9e"/><circle cx="7.9" cy="7.9" r="0.9" fill="#9e9e9e"/><circle cx="7.9" cy="11.3" r="0.9" fill="#9e9e9e"/></svg><span class="lb">Compone...</span></div>
<div class="nd l2" style="left:838.86px;top:558.6px;width:38px;height:38px;border:1px solid #c9e8c2;border-radius:8px;z-index:2"><svg class="dev" width="16" height="19" viewBox="0 0 16 19"><rect x="0.75" y="0.75" width="14.5" height="17.5" rx="1.6" fill="none" stroke="#9e9e9e" stroke-width="1.5"/><path d="M4.4 1 V11.9 L6.5 14.8 V18.3 M11.4 1 V11.9 L9.2 14.8 V18.3" fill="none" stroke="#9e9e9e" stroke-width="1.6"/><circle cx="7.9" cy="4.5" r="0.9" fill="#9e9e9e"/><circle cx="7.9" cy="7.9" r="0.9" fill="#9e9e9e"/><circle cx="7.9" cy="11.3" r="0.9" fill="#9e9e9e"/></svg><span class="lb">Compone...</span></div>
<div class="nd l2" style="left:860.48px;top:558.6px;width:38px;height:38px;border:1px solid #c9e8c2;border-radius:8px;z-index:2"><svg class="dev" width="16" height="19" viewBox="0 0 16 19"><rect x="0.75" y="0.75" width="14.5" height="17.5" rx="1.6" fill="none" stroke="#9e9e9e" stroke-width="1.5"/><path d="M4.4 1 V11.9 L6.5 14.8 V18.3 M11.4 1 V11.9 L9.2 14.8 V18.3" fill="none" stroke="#9e9e9e" stroke-width="1.6"/><circle cx="7.9" cy="4.5" r="0.9" fill="#9e9e9e"/><circle cx="7.9" cy="7.9" r="0.9" fill="#9e9e9e"/><circle cx="7.9" cy="11.3" r="0.9" fill="#9e9e9e"/></svg><span class="lb">Compone...</span></div>
<div class="nd l2" style="left:882.1px;top:558.6px;width:38px;height:38px;border:1px solid #c9e8c2;border-radius:8px;z-index:2"><svg class="dev" width="16" height="19" viewBox="0 0 16 19"><rect x="0.75" y="0.75" width="14.5" height="17.5" rx="1.6" fill="none" stroke="#9e9e9e" stroke-width="1.5"/><path d="M4.4 1 V11.9 L6.5 14.8 V18.3 M11.4 1 V11.9 L9.2 14.8 V18.3" fill="none" stroke="#9e9e9e" stroke-width="1.6"/><circle cx="7.9" cy="4.5" r="0.9" fill="#9e9e9e"/><circle cx="7.9" cy="7.9" r="0.9" fill="#9e9e9e"/><circle cx="7.9" cy="11.3" r="0.9" fill="#9e9e9e"/></svg><span class="lb">Compone...</span></div>
<div class="nd l2" style="left:903.72px;top:558.6px;width:38px;height:38px;border:1px solid #c9e8c2;border-radius:8px;z-index:2"><svg class="dev" width="16" height="19" viewBox="0 0 16 19"><rect x="0.75" y="0.75" width="14.5" height="17.5" rx="1.6" fill="none" stroke="#9e9e9e" stroke-width="1.5"/><path d="M4.4 1 V11.9 L6.5 14.8 V18.3 M11.4 1 V11.9 L9.2 14.8 V18.3" fill="none" stroke="#9e9e9e" stroke-width="1.6"/><circle cx="7.9" cy="4.5" r="0.9" fill="#9e9e9e"/><circle cx="7.9" cy="7.9" r="0.9" fill="#9e9e9e"/><circle cx="7.9" cy="11.3" r="0.9" fill="#9e9e9e"/></svg><span class="lb">Compone...</span></div>
<div class="nd l2" style="left:925.34px;top:558.6px;width:38px;height:38px;border:1px solid #c9e8c2;border-radius:8px;z-index:2"><svg class="dev" width="16" height="19" viewBox="0 0 16 19"><rect x="0.75" y="0.75" width="14.5" height="17.5" rx="1.6" fill="none" stroke="#9e9e9e" stroke-width="1.5"/><path d="M4.4 1 V11.9 L6.5 14.8 V18.3 M11.4 1 V11.9 L9.2 14.8 V18.3" fill="none" stroke="#9e9e9e" stroke-width="1.6"/><circle cx="7.9" cy="4.5" r="0.9" fill="#9e9e9e"/><circle cx="7.9" cy="7.9" r="0.9" fill="#9e9e9e"/><circle cx="7.9" cy="11.3" r="0.9" fill="#9e9e9e"/></svg><span class="lb">Compone...</span></div>
<div class="nd l2" style="left:946.96px;top:558.6px;width:38px;height:38px;border:1px solid #c9e8c2;border-radius:8px;z-index:2"><svg class="dev" width="16" height="19" viewBox="0 0 16 19"><rect x="0.75" y="0.75" width="14.5" height="17.5" rx="1.6" fill="none" stroke="#9e9e9e" stroke-width="1.5"/><path d="M4.4 1 V11.9 L6.5 14.8 V18.3 M11.4 1 V11.9 L9.2 14.8 V18.3" fill="none" stroke="#9e9e9e" stroke-width="1.6"/><circle cx="7.9" cy="4.5" r="0.9" fill="#9e9e9e"/><circle cx="7.9" cy="7.9" r="0.9" fill="#9e9e9e"/><circle cx="7.9" cy="11.3" r="0.9" fill="#9e9e9e"/></svg><span class="lb">Compone...</span></div>
<div class="nd l2" style="left:968.58px;top:558.6px;width:38px;height:38px;border:1px solid #c9e8c2;border-radius:8px;z-index:2"><svg class="dev" width="16" height="19" viewBox="0 0 16 19"><rect x="0.75" y="0.75" width="14.5" height="17.5" rx="1.6" fill="none" stroke="#9e9e9e" stroke-width="1.5"/><path d="M4.4 1 V11.9 L6.5 14.8 V18.3 M11.4 1 V11.9 L9.2 14.8 V18.3" fill="none" stroke="#9e9e9e" stroke-width="1.6"/><circle cx="7.9" cy="4.5" r="0.9" fill="#9e9e9e"/><circle cx="7.9" cy="7.9" r="0.9" fill="#9e9e9e"/><circle cx="7.9" cy="11.3" r="0.9" fill="#9e9e9e"/></svg><span class="lb">Compone...</span></div>
<div class="nd l2" style="left:990.2px;top:558.6px;width:38px;height:38px;border:1px solid #c9e8c2;border-radius:8px;z-index:2"><svg class="dev" width="16" height="19" viewBox="0 0 16 19"><rect x="0.75" y="0.75" width="14.5" height="17.5" rx="1.6" fill="none" stroke="#9e9e9e" stroke-width="1.5"/><path d="M4.4 1 V11.9 L6.5 14.8 V18.3 M11.4 1 V11.9 L9.2 14.8 V18.3" fill="none" stroke="#9e9e9e" stroke-width="1.6"/><circle cx="7.9" cy="4.5" r="0.9" fill="#9e9e9e"/><circle cx="7.9" cy="7.9" r="0.9" fill="#9e9e9e"/><circle cx="7.9" cy="11.3" r="0.9" fill="#9e9e9e"/></svg><span class="lb">Compone...</span></div>
<div class="nd l2" style="left:1011.82px;top:558.6px;width:38px;height:38px;border:1px solid #c9e8c2;border-radius:8px;z-index:2"><svg class="dev" width="16" height="19" viewBox="0 0 16 19"><rect x="0.75" y="0.75" width="14.5" height="17.5" rx="1.6" fill="none" stroke="#9e9e9e" stroke-width="1.5"/><path d="M4.4 1 V11.9 L6.5 14.8 V18.3 M11.4 1 V11.9 L9.2 14.8 V18.3" fill="none" stroke="#9e9e9e" stroke-width="1.6"/><circle cx="7.9" cy="4.5" r="0.9" fill="#9e9e9e"/><circle cx="7.9" cy="7.9" r="0.9" fill="#9e9e9e"/><circle cx="7.9" cy="11.3" r="0.9" fill="#9e9e9e"/></svg><span class="lb">Compone...</span></div>
<div class="nd l2" style="left:1033.44px;top:558.6px;width:38px;height:38px;border:1px solid #c9e8c2;border-radius:8px;z-index:2"><svg class="dev" width="16" height="19" viewBox="0 0 16 19"><rect x="0.75" y="0.75" width="14.5" height="17.5" rx="1.6" fill="none" stroke="#9e9e9e" stroke-width="1.5"/><path d="M4.4 1 V11.9 L6.5 14.8 V18.3 M11.4 1 V11.9 L9.2 14.8 V18.3" fill="none" stroke="#9e9e9e" stroke-width="1.6"/><circle cx="7.9" cy="4.5" r="0.9" fill="#9e9e9e"/><circle cx="7.9" cy="7.9" r="0.9" fill="#9e9e9e"/><circle cx="7.9" cy="11.3" r="0.9" fill="#9e9e9e"/></svg><span class="lb">Compone...</span></div>
<div class="nd l2" style="left:1055.06px;top:558.6px;width:38px;height:38px;border:1px solid #c9e8c2;border-radius:8px;z-index:2"><svg class="dev" width="16" height="19" viewBox="0 0 16 19"><rect x="0.75" y="0.75" width="14.5" height="17.5" rx="1.6" fill="none" stroke="#9e9e9e" stroke-width="1.5"/><path d="M4.4 1 V11.9 L6.5 14.8 V18.3 M11.4 1 V11.9 L9.2 14.8 V18.3" fill="none" stroke="#9e9e9e" stroke-width="1.6"/><circle cx="7.9" cy="4.5" r="0.9" fill="#9e9e9e"/><circle cx="7.9" cy="7.9" r="0.9" fill="#9e9e9e"/><circle cx="7.9" cy="11.3" r="0.9" fill="#9e9e9e"/></svg><span class="lb">Compone...</span></div>
<div class="nd l2" style="left:1076.68px;top:558.6px;width:38px;height:38px;border:1px solid #c9e8c2;border-radius:8px;z-index:2"><svg class="dev" width="16" height="19" viewBox="0 0 16 19"><rect x="0.75" y="0.75" width="14.5" height="17.5" rx="1.6" fill="none" stroke="#9e9e9e" stroke-width="1.5"/><path d="M4.4 1 V11.9 L6.5 14.8 V18.3 M11.4 1 V11.9 L9.2 14.8 V18.3" fill="none" stroke="#9e9e9e" stroke-width="1.6"/><circle cx="7.9" cy="4.5" r="0.9" fill="#9e9e9e"/><circle cx="7.9" cy="7.9" r="0.9" fill="#9e9e9e"/><circle cx="7.9" cy="11.3" r="0.9" fill="#9e9e9e"/></svg><span class="lb">Compone...</span></div>
<div class="nd l1" style="left:70.8px;top:450px;width:36px;height:36px;border:2px solid #4cb050;border-radius:7px;z-index:3"><svg class="cis" width="36" height="36" viewBox="0 0 36 36"><g fill="#7cc8ee"><rect x="8.1" y="13.2" width="1.2" height="2.2"/><rect x="10" y="12" width="1.2" height="3.4"/><rect x="11.9" y="11" width="1.1" height="4.4"/><rect x="13.4" y="11" width="1" height="4.4"/></g><text x="10" y="21" font-family="Liberation Sans" font-size="6.2" font-weight="bold" fill="#5bbbe9">cis</text><circle cx="24.2" cy="18.9" r="1.5" fill="none" stroke="#5bbbe9" stroke-width="1.25"/></svg><span class="lb">Compone...</span></div>
<div class="nd l1" style="left:178.9px;top:450px;width:36px;height:36px;border:2px solid #4cb050;border-radius:7px;z-index:3"><svg class="dev" width="16" height="19" viewBox="0 0 16 19"><rect x="0.75" y="0.75" width="14.5" height="17.5" rx="1.6" fill="none" stroke="#9e9e9e" stroke-width="1.5"/><path d="M4.4 1 V11.9 L6.5 14.8 V18.3 M11.4 1 V11.9 L9.2 14.8 V18.3" fill="none" stroke="#9e9e9e" stroke-width="1.6"/><circle cx="7.9" cy="4.5" r="0.9" fill="#9e9e9e"/><circle cx="7.9" cy="7.9" r="0.9" fill="#9e9e9e"/><circle cx="7.9" cy="11.3" r="0.9" fill="#9e9e9e"/></svg><span class="lb">Compone...</span></div>
<div class="nd l1" style="left:287px;top:450px;width:36px;height:36px;border:2px solid #4cb050;border-radius:7px;z-index:3"><svg class="dev" width="16" height="19" viewBox="0 0 16 19"><rect x="0.75" y="0.75" width="14.5" height="17.5" rx="1.6" fill="none" stroke="#9e9e9e" stroke-width="1.5"/><path d="M4.4 1 V11.9 L6.5 14.8 V18.3 M11.4 1 V11.9 L9.2 14.8 V18.3" fill="none" stroke="#9e9e9e" stroke-width="1.6"/><circle cx="7.9" cy="4.5" r="0.9" fill="#9e9e9e"/><circle cx="7.9" cy="7.9" r="0.9" fill="#9e9e9e"/><circle cx="7.9" cy="11.3" r="0.9" fill="#9e9e9e"/></svg><span class="lb">Compone...</span></div>
<div class="nd l1" style="left:395.1px;top:450px;width:36px;height:36px;border:2px solid #4cb050;border-radius:7px;z-index:3"><svg class="dev" width="16" height="19" viewBox="0 0 16 19"><rect x="0.75" y="0.75" width="14.5" height="17.5" rx="1.6" fill="none" stroke="#9e9e9e" stroke-width="1.5"/><path d="M4.4 1 V11.9 L6.5 14.8 V18.3 M11.4 1 V11.9 L9.2 14.8 V18.3" fill="none" stroke="#9e9e9e" stroke-width="1.6"/><circle cx="7.9" cy="4.5" r="0.9" fill="#9e9e9e"/><circle cx="7.9" cy="7.9" r="0.9" fill="#9e9e9e"/><circle cx="7.9" cy="11.3" r="0.9" fill="#9e9e9e"/></svg><span class="lb">Compone...</span></div>
<div class="nd l1" style="left:503.2px;top:450px;width:36px;height:36px;border:2px solid #4cb050;border-radius:7px;z-index:3"><svg class="dev" width="16" height="19" viewBox="0 0 16 19"><rect x="0.75" y="0.75" width="14.5" height="17.5" rx="1.6" fill="none" stroke="#9e9e9e" stroke-width="1.5"/><path d="M4.4 1 V11.9 L6.5 14.8 V18.3 M11.4 1 V11.9 L9.2 14.8 V18.3" fill="none" stroke="#9e9e9e" stroke-width="1.6"/><circle cx="7.9" cy="4.5" r="0.9" fill="#9e9e9e"/><circle cx="7.9" cy="7.9" r="0.9" fill="#9e9e9e"/><circle cx="7.9" cy="11.3" r="0.9" fill="#9e9e9e"/></svg><span class="lb">Compone...</span></div>
<div class="nd l1" style="left:611.3px;top:450px;width:36px;height:36px;border:2px solid #4cb050;border-radius:7px;z-index:3"><svg class="dev" width="16" height="19" viewBox="0 0 16 19"><rect x="0.75" y="0.75" width="14.5" height="17.5" rx="1.6" fill="none" stroke="#9e9e9e" stroke-width="1.5"/><path d="M4.4 1 V11.9 L6.5 14.8 V18.3 M11.4 1 V11.9 L9.2 14.8 V18.3" fill="none" stroke="#9e9e9e" stroke-width="1.6"/><circle cx="7.9" cy="4.5" r="0.9" fill="#9e9e9e"/><circle cx="7.9" cy="7.9" r="0.9" fill="#9e9e9e"/><circle cx="7.9" cy="11.3" r="0.9" fill="#9e9e9e"/></svg><span class="lb">Compone...</span></div>
<div class="nd l1" style="left:719.4px;top:450px;width:36px;height:36px;border:2px solid #4cb050;border-radius:7px;z-index:3"><svg class="dev" width="16" height="19" viewBox="0 0 16 19"><rect x="0.75" y="0.75" width="14.5" height="17.5" rx="1.6" fill="none" stroke="#9e9e9e" stroke-width="1.5"/><path d="M4.4 1 V11.9 L6.5 14.8 V18.3 M11.4 1 V11.9 L9.2 14.8 V18.3" fill="none" stroke="#9e9e9e" stroke-width="1.6"/><circle cx="7.9" cy="4.5" r="0.9" fill="#9e9e9e"/><circle cx="7.9" cy="7.9" r="0.9" fill="#9e9e9e"/><circle cx="7.9" cy="11.3" r="0.9" fill="#9e9e9e"/></svg><span class="lb">Compone...</span></div>
<div class="nd l1" style="left:827.5px;top:450px;width:36px;height:36px;border:2px solid #4cb050;border-radius:7px;z-index:3"><svg class="dev" width="16" height="19" viewBox="0 0 16 19"><rect x="0.75" y="0.75" width="14.5" height="17.5" rx="1.6" fill="none" stroke="#9e9e9e" stroke-width="1.5"/><path d="M4.4 1 V11.9 L6.5 14.8 V18.3 M11.4 1 V11.9 L9.2 14.8 V18.3" fill="none" stroke="#9e9e9e" stroke-width="1.6"/><circle cx="7.9" cy="4.5" r="0.9" fill="#9e9e9e"/><circle cx="7.9" cy="7.9" r="0.9" fill="#9e9e9e"/><circle cx="7.9" cy="11.3" r="0.9" fill="#9e9e9e"/></svg><span class="lb">Compone...</span></div>
<div class="nd l1" style="left:935.6px;top:450px;width:36px;height:36px;border:2px solid #4cb050;border-radius:7px;z-index:3"><svg class="dev" width="16" height="19" viewBox="0 0 16 19"><rect x="0.75" y="0.75" width="14.5" height="17.5" rx="1.6" fill="none" stroke="#9e9e9e" stroke-width="1.5"/><path d="M4.4 1 V11.9 L6.5 14.8 V18.3 M11.4 1 V11.9 L9.2 14.8 V18.3" fill="none" stroke="#9e9e9e" stroke-width="1.6"/><circle cx="7.9" cy="4.5" r="0.9" fill="#9e9e9e"/><circle cx="7.9" cy="7.9" r="0.9" fill="#9e9e9e"/><circle cx="7.9" cy="11.3" r="0.9" fill="#9e9e9e"/></svg><span class="lb">Compone...</span></div>
<div class="nd l1" style="left:1043.7px;top:450px;width:36px;height:36px;border:2px solid #4cb050;border-radius:7px;z-index:3"><svg class="dev" width="16" height="19" viewBox="0 0 16 19"><rect x="0.75" y="0.75" width="14.5" height="17.5" rx="1.6" fill="none" stroke="#9e9e9e" stroke-width="1.5"/><path d="M4.4 1 V11.9 L6.5 14.8 V18.3 M11.4 1 V11.9 L9.2 14.8 V18.3" fill="none" stroke="#9e9e9e" stroke-width="1.6"/><circle cx="7.9" cy="4.5" r="0.9" fill="#9e9e9e"/><circle cx="7.9" cy="7.9" r="0.9" fill="#9e9e9e"/><circle cx="7.9" cy="11.3" r="0.9" fill="#9e9e9e"/></svg><span class="lb">Compone...</span></div>
<div class="nd l1c cl" style="left:1130.3px;top:450px;width:38px;height:38px;border:1px solid #c9e8c2;border-radius:8px;z-index:3"><svg class="dev" width="16" height="19" viewBox="0 0 16 19"><rect x="0.75" y="0.75" width="14.5" height="17.5" rx="1.6" fill="none" stroke="#9e9e9e" stroke-width="1.5"/><path d="M4.4 1 V11.9 L6.5 14.8 V18.3 M11.4 1 V11.9 L9.2 14.8 V18.3" fill="none" stroke="#9e9e9e" stroke-width="1.6"/><circle cx="7.9" cy="4.5" r="0.9" fill="#9e9e9e"/><circle cx="7.9" cy="7.9" r="0.9" fill="#9e9e9e"/><circle cx="7.9" cy="11.3" r="0.9" fill="#9e9e9e"/></svg><span class="lb">Cloud</span></div>
<div class="nd l1c cl" style="left:1195px;top:450px;width:38px;height:38px;border:1px solid #c9e8c2;border-radius:8px;z-index:3"><svg class="dev" width="16" height="19" viewBox="0 0 16 19"><rect x="0.75" y="0.75" width="14.5" height="17.5" rx="1.6" fill="none" stroke="#9e9e9e" stroke-width="1.5"/><path d="M4.4 1 V11.9 L6.5 14.8 V18.3 M11.4 1 V11.9 L9.2 14.8 V18.3" fill="none" stroke="#9e9e9e" stroke-width="1.6"/><circle cx="7.9" cy="4.5" r="0.9" fill="#9e9e9e"/><circle cx="7.9" cy="7.9" r="0.9" fill="#9e9e9e"/><circle cx="7.9" cy="11.3" r="0.9" fill="#9e9e9e"/></svg><span class="lb">Cloud</span></div>
<div class="nd l1c cl" style="left:1162.9px;top:342px;width:38px;height:38px;border:1px solid #c9e8c2;border-radius:8px;z-index:3"><svg class="dev" width="16" height="19" viewBox="0 0 16 19"><rect x="0.75" y="0.75" width="14.5" height="17.5" rx="1.6" fill="none" stroke="#9e9e9e" stroke-width="1.5"/><path d="M4.4 1 V11.9 L6.5 14.8 V18.3 M11.4 1 V11.9 L9.2 14.8 V18.3" fill="none" stroke="#9e9e9e" stroke-width="1.6"/><circle cx="7.9" cy="4.5" r="0.9" fill="#9e9e9e"/><circle cx="7.9" cy="7.9" r="0.9" fill="#9e9e9e"/><circle cx="7.9" cy="11.3" r="0.9" fill="#9e9e9e"/></svg><span class="lb">Icmp</span></div>
<div class="nd rt" style="left:553.3px;top:338px;width:42px;height:42px;border:3px solid #4cb050;border-radius:10px;z-index:3"><svg width="22" height="24" viewBox="0 0 22 24"><path d="M3.6 3 H10.1 V3.6 H16.8 V12.4 H10.1 V13 H3.6Z" fill="#2d2d2d"/><rect x="3.80" y="3.80" width="1.5" height="1.7" fill="#e23b3b"/><rect x="5.95" y="3.80" width="1.5" height="1.7" fill="#eeeeee"/><rect x="8.10" y="3.80" width="1.5" height="1.7" fill="#e23b3b"/><rect x="10.25" y="3.20" width="1.5" height="1.7" fill="#eeeeee"/><rect x="12.40" y="3.20" width="1.5" height="1.7" fill="#e23b3b"/><rect x="14.55" y="3.20" width="1.5" height="1.7" fill="#eeeeee"/><rect x="3.80" y="6.25" width="1.5" height="1.7" fill="#eeeeee"/><rect x="5.95" y="6.25" width="1.5" height="1.7" fill="#e23b3b"/><rect x="8.10" y="6.25" width="1.5" height="1.7" fill="#eeeeee"/><rect x="10.25" y="5.65" width="1.5" height="1.7" fill="#e23b3b"/><rect x="12.40" y="5.65" width="1.5" height="1.7" fill="#eeeeee"/><rect x="14.55" y="5.65" width="1.5" height="1.7" fill="#e23b3b"/><rect x="3.80" y="8.70" width="1.5" height="1.7" fill="#e23b3b"/><rect x="5.95" y="8.70" width="1.5" height="1.7" fill="#eeeeee"/><rect x="8.10" y="8.70" width="1.5" height="1.7" fill="#e23b3b"/><rect x="10.25" y="8.10" width="1.5" height="1.7" fill="#eeeeee"/><rect x="12.40" y="8.10" width="1.5" height="1.7" fill="#e23b3b"/><rect x="14.55" y="8.10" width="1.5" height="1.7" fill="#eeeeee"/><rect x="3.80" y="11.15" width="1.5" height="1.7" fill="#eeeeee"/><rect x="5.95" y="11.15" width="1.5" height="1.7" fill="#e23b3b"/><rect x="8.10" y="11.15" width="1.5" height="1.7" fill="#eeeeee"/><rect x="10.25" y="10.55" width="1.5" height="1.7" fill="#e23b3b"/><rect x="12.40" y="10.55" width="1.5" height="1.7" fill="#eeeeee"/><rect x="14.55" y="10.55" width="1.5" height="1.7" fill="#e23b3b"/><rect x="2.3" y="2" width="1.9" height="21.6" fill="#262626"/><rect x="1.8" y="1.6" width="2.8" height="1.4" rx="0.6" fill="#b8bcc4"/></svg><span class="lb">Icmp</span></div>
<div class="fab" style="left:6px;top:63px"><svg width="24" height="24" viewBox="0 0 24 24"><path fill="#fff" d="M11.99 18.54l-7.37-5.73L3 14.07l9 7 9-7-1.63-1.27-7.38 5.74zM12 16l7.36-5.73L21 9l-9-7-9 7 1.63 1.27L12 16z"/></svg></div>
<div class="fab" style="left:1217px;top:63px"><svg width="24" height="24" viewBox="0 0 24 24"><path fill="#fff" d="M15.5 14h-.79l-.28-.27C15.41 12.59 16 11.11 16 9.5 16 5.91 13.09 3 9.5 3S3 5.91 3 9.5 5.91 16 9.5 16c1.61 0 3.09-.59 4.23-1.57l.27.28v.79l5 4.99L20.49 19l-4.99-5zm-6 0C7.01 14 5 11.99 5 9.5S7.01 5 9.5 5 14 7.01 14 9.5 11.99 14 9.5 14z"/><path fill="#fff" d="M12 10h-2v2H9v-2H7V9h2V7h1v2h2v1z"/></svg></div>
<div class="fab" style="left:1217px;top:105px"><svg width="24" height="24" viewBox="0 0 24 24"><path fill="#fff" d="M15.5 14h-.79l-.28-.27C15.41 12.59 16 11.11 16 9.5 16 5.91 13.09 3 9.5 3S3 5.91 3 9.5 5.91 16 9.5 16c1.61 0 3.09-.59 4.23-1.57l.27.28v.79l5 4.99L20.49 19l-4.99-5zm-6 0C7.01 14 5 11.99 5 9.5S7.01 5 9.5 5 14 7.01 14 9.5 11.99 14 9.5 14zM7 9h5v1H7z"/></svg></div>
<div class="fab" style="left:1217px;top:153px"><svg width="24" height="24" viewBox="0 0 24 24"><path fill="#fff" d="M10 9h4V6h3l-5-5-5 5h3v3zm-1 1H6V7l-5 5 5 5v-3h3v-4zm14 2l-5-5v3h-3v4h3v3l5-5zm-9 3h-4v3H7l5 5 5-5h-3v-3z"/></svg></div>
<div class="fab" style="left:1217px;top:195px"><svg width="24" height="24" viewBox="0 0 24 24"><path fill="#fff" d="M3 5h2V3c-1.1 0-2 .9-2 2zm0 8h2v-2H3v2zm4 8h2v-2H7v2zM3 9h2V7H3v2zm10-6h-2v2h2V3zm6 0v2h2c0-1.1-.9-2-2-2zM5 21v-2H3c0 1.1.9 2 2 2zm-2-4h2v-2H3v2zM9 3H7v2h2V3zm2 18h2v-2h-2v2zm8-8h2v-2h-2v2zm0 8c1.1 0 2-.9 2-2h-2v2zm0-12h2V7h-2v2zm0 8h2v-2h-2v2zm-4 4h2v-2h-2v2zm0-16h2V3h-2v2zM7 17h10V7H7v10zm2-8h6v6H9V9z"/></svg></div>
<div class="pop"><div class="ins"></div><div class="v" style="left:22px;top:25px;letter-spacing:-0.15px">10.2.18.28</div><svg style="position:absolute;left:95px;top:27px" width="9" height="13" viewBox="0 0 9 13"><path d="M1.5 1.5 L6.5 6.5 L1.5 11.5" fill="none" stroke="#222" stroke-width="2"/></svg><div style="position:absolute;left:0;top:67px;width:281px;height:1px;background:#e0e0e0"></div><svg style="position:absolute;left:59px;top:91px" width="24" height="24" viewBox="0 0 24 24"><circle cx="12" cy="12" r="7.9" fill="none" stroke="#222" stroke-width="1.6"/><circle cx="12" cy="12" r="3.9" fill="#222"/><path d="M12 1.4v3 M12 19.6v3 M1.4 12h3 M19.6 12h3" stroke="#222" stroke-width="1.5"/></svg><div class="l" style="left:145px;top:86px">Name</div><div class="v" style="left:145px;top:104px">10.2.18.28</div><div class="l" style="left:13px;top:132px">State</div><div style="position:absolute;left:16px;top:152px;width:13px;height:13px;border-radius:50%;background:#4caf50"></div><div class="v" style="left:36px;top:150px">Healthy</div><div class="l" style="left:145px;top:132px">Collecting</div><div class="v" style="left:145px;top:150px">-</div><div class="l" style="left:13px;top:178px">Collection Details</div><div class="v" style="left:13px;top:196px">-</div><div class="l" style="left:145px;top:178px">IP</div><div class="v" style="left:145px;top:196px">10.2.18.28</div><div class="l" style="left:13px;top:224px">Device Class</div><div class="v" style="left:13px;top:242.7px">Ping ICMP</div><div class="l" style="left:145px;top:224px">Device Type</div><div class="v" style="left:145px;top:242.7px">physical</div><div style="position:absolute;left:280px;top:0;width:18px;height:248px;background:#f1f1f1"></div><div style="position:absolute;left:281px;top:15px;width:15px;height:114px;background:#dcdcdc"></div><svg style="position:absolute;left:284.5px;top:3px" width="8" height="8" viewBox="0 0 8 8"><path d="M1.2 6.4 L4 3.2 L6.8 6.4" fill="none" stroke="#4a4a4a" stroke-width="2.4"/></svg><svg style="position:absolute;left:284.5px;top:235px" width="8" height="8" viewBox="0 0 8 8"><path d="M1.2 1.8 L4 5 L6.8 1.8" fill="none" stroke="#4a4a4a" stroke-width="2.4"/></svg></div>
</body></html>
